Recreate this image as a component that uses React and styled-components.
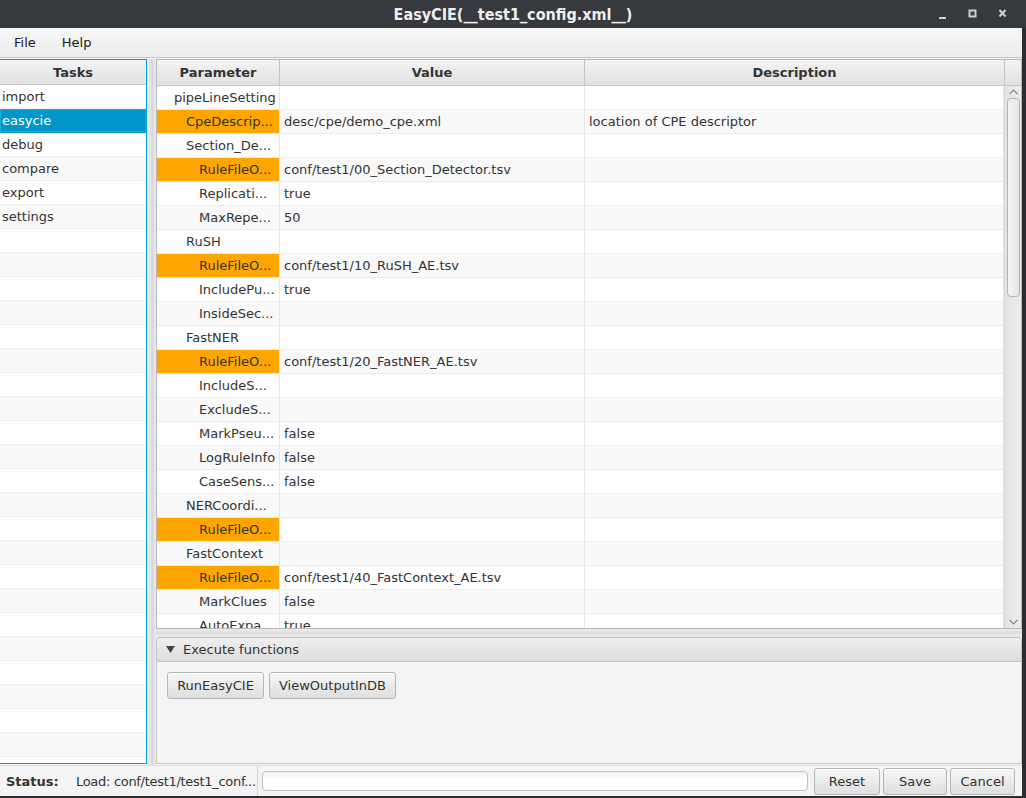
import React from 'react'
import styled, { createGlobalStyle } from 'styled-components'

const GlobalStyle = createGlobalStyle`
    html, body {
        margin:0;
        padding:0;
        background:#2b2d30;
    }
    * { box-sizing:border-box; }
`;

const Screen = styled.div`
    width:1026px;
    height:798px;
    display:flex;
    flex-direction:column;
    background:#2b2d30;
    font-family:"DejaVu Sans", "Liberation Sans", sans-serif;
    font-size:13px;
    color:#333;
    overflow:hidden;
`;

const TitleBar = styled.div`
    height:28px;
    flex:none;
    background:#36393e;
    display:flex;
    align-items:center;
    justify-content:center;
    position:relative;
    color:#f0f0f0;
    font-family:"DejaVu Sans Condensed", "DejaVu Sans", sans-serif;
    font-stretch:condensed;
    font-weight:bold;
    font-size:16px;
`;

const WinControls = styled.div`
    position:absolute;
    right:18px;
    top:8px;
    display:flex;
    gap:20px;
    align-items:center;
`;

const Window = styled.div`
    width:1022px;
    height:768px;
    display:flex;
    flex-direction:column;
    background:#f4f4f4;
`;

const MenuBar = styled.div`
    height:30px;
    flex:none;
    display:flex;
    align-items:center;
    gap:26px;
    padding-left:14px;
    background:linear-gradient(#f7f7f7, #ececec);
    border-bottom:1px solid #c9c9c9;
`;

const MenuItem = styled.span`
    font-size:13px;
    color:#222;
`;

const Main = styled.div`
    flex:1;
    display:flex;
    padding-top:1px;
    min-height:0;
`;

const TaskPane = styled.div`
    width:147px;
    flex:none;
    border:1px solid #039ed3;
    border-left:none;
    background:#fff;
    display:flex;
    flex-direction:column;
    overflow:hidden;
    margin-bottom:1px;
`;

const HeaderCell = styled.div`
    height:${p => p.tall ? 26 : 25}px;
    flex:none;
    display:flex;
    align-items:center;
    justify-content:center;
    font-weight:bold;
    color:#333;
    background:linear-gradient(#f3f3f3, #e1e1e1);
    border-bottom:1px solid #c5c5c5;
    border-right:${p => p.last ? 'none' : '1px solid #c5c5c5'};
`;

const TaskRow = styled.div`
    height:24px;
    flex:none;
    display:flex;
    align-items:center;
    padding-left:2px;
    background:${p => p.selected ? '#0096c9' : p.odd ? '#f9f9f9' : '#fff'};
    color:${p => p.selected ? '#fff' : '#333'};
    border-bottom:1px solid ${p => p.selected ? '#0096c9' : '#f0f0f0'};
    box-shadow:${p => p.selected ? 'inset 0 0 0 1px #23a9d9' : 'none'};
`;

const Divider = styled.div`
    width:9px;
    flex:none;
    background:linear-gradient(90deg, #ececec, #e2e2e2 45%, #d6d6d6 55%, #ececec);
`;

const RightPane = styled.div`
    flex:1;
    display:flex;
    flex-direction:column;
    min-width:0;
`;

const Table = styled.div`
    height:570px;
    flex:none;
    border:1px solid #b8b8b8;
    background:#fff;
    display:flex;
    flex-direction:column;
    overflow:hidden;
`;

const HeaderRow = styled.div`
    display:grid;
    grid-template-columns:123px 305px 420px 1fr;
`;

const Body = styled.div`
    flex:1;
    display:flex;
    min-height:0;
`;

const Rows = styled.div`
    flex:1;
    overflow:hidden;
`;

const Row = styled.div`
    display:grid;
    grid-template-columns:123px 305px 1fr;
    height:24px;
    background:${p => p.odd ? '#f9f9f9' : '#fff'};
`;

const Cell = styled.div`
    display:flex;
    align-items:center;
    padding-left:${p => p.indent ?? 4}px;
    padding-right:2px;
    background:${p => p.hot ? '#ffa500' : 'transparent'};
    border-right:1px solid #e6e6e6;
    border-bottom:1px solid #ececec;
    overflow:hidden;
    min-width:0;
`;

const CellText = styled.span`
    white-space:nowrap;
`;

const ScrollBar = styled.div`
    width:17px;
    flex:none;
    background:linear-gradient(90deg, #e4e4e4, #ececec);
    border-left:1px solid #d6d6d6;
    display:flex;
    flex-direction:column;
    align-items:center;
`;

const ScrollArrow = styled.div`
    height:12px;
    display:flex;
    align-items:center;
    justify-content:center;
    flex:none;
`;

const Thumb = styled.div`
    width:13px;
    height:199px;
    border:1px solid #b3b3b3;
    border-radius:4px;
    background:linear-gradient(90deg, #f4f4f4, #e6e6e6);
`;

const ScrollSpace = styled.div`
    flex:1;
`;

const SplitBar = styled.div`
    height:8px;
    flex:none;
    background:linear-gradient(#ececec, #dedede 50%, #ececec);
`;

const TitledPane = styled.div`
    flex:1;
    display:flex;
    flex-direction:column;
    margin-bottom:1px;
`;

const PaneHeader = styled.div`
    height:25px;
    flex:none;
    display:flex;
    align-items:center;
    gap:8px;
    padding-left:9px;
    border:1px solid #c3c3c3;
    border-radius:3px 3px 0 0;
    background:linear-gradient(#efefef, #dddddd);
    color:#333;
    font-size:13px;
`;

const PaneContent = styled.div`
    flex:1;
    border:1px solid #c8c8c8;
    border-top:none;
    background:#f4f4f4;
    display:flex;
    align-items:flex-start;
    gap:5px;
    padding:10px 10px;
`;

const Button = styled.button`
    height:27px;
    padding:0;
    font-family:inherit;
    font-size:13px;
    color:#333;
    border:1px solid #b5b5b5;
    border-radius:3px;
    background:linear-gradient(#f7f7f7, #dedede);
    box-shadow:inset 0 1px 0 #fff;
    display:flex;
    align-items:center;
    justify-content:center;
    width:${p => p.w}px;
`;

const StatusBar = styled.div`
    height:31px;
    flex:none;
    display:flex;
    align-items:center;
    border-top:1px solid #e0e0e0;
`;

const StatusLabel = styled.span`
    font-weight:bold;
    margin-left:6px;
    width:70px;
    flex:none;
`;

const StatusText = styled.span`
    width:181px;
    flex:none;
    white-space:nowrap;
    letter-spacing:-0.3px;
`;

const Sep = styled.div`
    width:1px;
    align-self:stretch;
    background:#d4d4d4;
    margin:0 4px 0 0;
`;

const Progress = styled.div`
    width:546px;
    height:20px;
    border:1px solid #c3c3c3;
    border-radius:4px;
    background:linear-gradient(#f0f0f0, #fff 40%);
    margin-right:6px;
`;

const ActionGroup = styled.div`
    display:flex;
    gap:3px;
`;

const tasks = ['import', 'easycie', 'debug', 'compare', 'export', 'settings']

const params = [
    ['pipeLineSetting', 0],
    ['CpeDescrip...', 1, true, 'desc/cpe/demo_cpe.xml', 'location of CPE descriptor'],
    ['Section_De...', 1],
    ['RuleFileO...', 2, true, 'conf/test1/00_Section_Detector.tsv'],
    ['Replicati...', 2, false, 'true'],
    ['MaxRepe...', 2, false, '50'],
    ['RuSH', 1],
    ['RuleFileO...', 2, true, 'conf/test1/10_RuSH_AE.tsv'],
    ['IncludePu...', 2, false, 'true'],
    ['InsideSec...', 2],
    ['FastNER', 1],
    ['RuleFileO...', 2, true, 'conf/test1/20_FastNER_AE.tsv'],
    ['IncludeS...', 2],
    ['ExcludeS...', 2],
    ['MarkPseu...', 2, false, 'false'],
    ['LogRuleInfo', 2, false, 'false'],
    ['CaseSens...', 2, false, 'false'],
    ['NERCoordi...', 1],
    ['RuleFileO...', 2, true],
    ['FastContext', 1],
    ['RuleFileO...', 2, true, 'conf/test1/40_FastContext_AE.tsv'],
    ['MarkClues', 2, false, 'false'],
    ['AutoExpa...', 2, false, 'true'],
]

const indents = [17, 29, 42]

function Chevron({ up }) {
    return (
        <svg width="9" height="6" viewBox="0 0 9 6">
            <path d={up ? 'M0.5 5 L4.5 1 L8.5 5' : 'M0.5 1 L4.5 5 L8.5 1'} stroke="#8a8a8a" strokeWidth="1.2" fill="none" />
        </svg>
    )
}

export default function App() {
    return (
        <>
            <GlobalStyle />
            <Screen>
                <TitleBar>
                    EasyCIE(__test1_config.xml__)
                    <WinControls>
                        <svg width="10" height="12" viewBox="0 0 10 12">
                            <rect x="1" y="9" width="7" height="2" fill="#d0d0d0" />
                        </svg>
                        <svg width="10" height="12" viewBox="0 0 10 12">
                            <rect x="1.5" y="2.5" width="6" height="6" stroke="#d0d0d0" strokeWidth="2" fill="none" />
                        </svg>
                        <svg width="10" height="12" viewBox="0 0 10 12">
                            <path d="M1.5 2 L7.5 8.5 M7.5 2 L1.5 8.5" stroke="#d0d0d0" strokeWidth="2" />
                        </svg>
                    </WinControls>
                </TitleBar>
                <Window>
                    <MenuBar>
                        <MenuItem>File</MenuItem>
                        <MenuItem>Help</MenuItem>
                    </MenuBar>
                    <Main>
                        <TaskPane>
                            <HeaderCell last>Tasks</HeaderCell>
                            {Array.from({ length: 30 }).map((_, i) => (
                                <TaskRow key={i} odd={i % 2 === 1} selected={i === 1}>
                                    {tasks[i] || ''}
                                </TaskRow>
                            ))}
                        </TaskPane>
                        <Divider />
                        <RightPane>
                            <Table>
                                <HeaderRow>
                                    <HeaderCell tall>Parameter</HeaderCell>
                                    <HeaderCell tall>Value</HeaderCell>
                                    <HeaderCell tall>Description</HeaderCell>
                                    <HeaderCell tall last />
                                </HeaderRow>
                                <Body>
                                    <Rows>
                                        {params.map(([name, level, hot, value, desc], i) => (
                                            <Row key={i} odd={i % 2 === 1}>
                                                <Cell indent={indents[level]} hot={hot}>
                                                    <CellText>{name}</CellText>
                                                </Cell>
                                                <Cell><CellText>{value || ''}</CellText></Cell>
                                                <Cell><CellText>{desc || ''}</CellText></Cell>
                                            </Row>
                                        ))}
                                    </Rows>
                                    <ScrollBar>
                                        <ScrollArrow><Chevron up /></ScrollArrow>
                                        <Thumb />
                                        <ScrollSpace />
                                        <ScrollArrow><Chevron /></ScrollArrow>
                                    </ScrollBar>
                                </Body>
                            </Table>
                            <SplitBar />
                            <TitledPane>
                                <PaneHeader>
                                    <svg width="9" height="7" viewBox="0 0 9 7">
                                        <path d="M0 0 L9 0 L4.5 7 Z" fill="#444" />
                                    </svg>
                                    Execute functions
                                </PaneHeader>
                                <PaneContent>
                                    <Button w={97}>RunEasyCIE</Button>
                                    <Button w={127}>ViewOutputInDB</Button>
                                </PaneContent>
                            </TitledPane>
                        </RightPane>
                    </Main>
                    <StatusBar>
                        <StatusLabel>Status:</StatusLabel>
                        <StatusText>Load: conf/test1/test1_conf...</StatusText>
                        <Sep />
                        <Progress />
                        <ActionGroup>
                            <Button w={66}>Reset</Button>
                            <Button w={64}>Save</Button>
                            <Button w={65}>Cancel</Button>
                        </ActionGroup>
                    </StatusBar>
                </Window>
            </Screen>
        </>
    )
}
